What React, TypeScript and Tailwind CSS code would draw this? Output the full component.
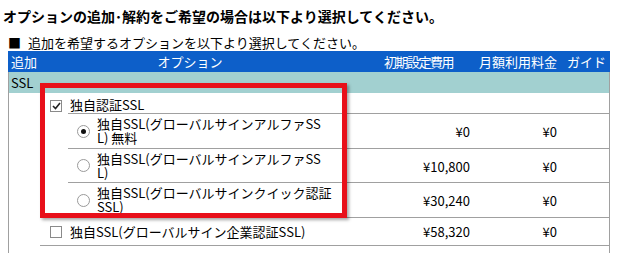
import React from 'react'

const font = { fontFamily: '"Noto Sans CJK JP", "Liberation Sans", sans-serif' }

function CheckBox({ checked }: { checked?: boolean }) {
  return (
    <span className="flex h-[12px] w-[12px] items-center justify-center border border-[#8a8a8a] bg-white">
      {checked && (
        <svg width="9" height="8" viewBox="0 0 9 8">
          <path d="M1 4 L3.5 6.5 L8 1" fill="none" stroke="#222" strokeWidth="1.6" />
        </svg>
      )}
    </span>
  )
}

function Radio({ checked }: { checked?: boolean }) {
  return (
    <span className="flex h-[13px] w-[13px] shrink-0 items-center justify-center rounded-full border border-[#9a9a9a] bg-white">
      {checked && <span className="h-[5px] w-[5px] rounded-full bg-[#111]" />}
    </span>
  )
}

const plans = [
  { lines: ['独自SSL(グローバルサインアルファSS', 'L) 無料'], init: '¥0', monthly: '¥0', checked: true, h: 'h-[35px]' },
  { lines: ['独自SSL(グローバルサインアルファSS', 'L)'], init: '¥10,800', monthly: '¥0', checked: false, h: 'h-[34px]' },
  { lines: ['独自SSL(グローバルサインクイック認証', 'SSL)'], init: '¥30,240', monthly: '¥0', checked: false, h: 'h-[35px]' },
]

export default function App() {
  return (
    <div className="relative h-[253px] w-[627px] overflow-hidden bg-white text-black" style={font}>
      {/* Heading */}
      <div className="mt-[7px] pl-[3px] text-[14px] font-bold leading-[18px]">
        オプションの追加･解約をご希望の場合は以下より選択してください。
      </div>
      <div className="mt-[10px] pl-[8px] text-[13px] leading-[16px]">
        <span className="mr-[4px]">■</span> 追加を希望するオプションを以下より選択してください。
      </div>

      {/* Table */}
      <div className="ml-[8px] w-[602px] text-[13px]">
        <div className="flex h-[21px] items-center bg-[#0d5fc9] text-white">
          <div className="w-[32px] pl-[3px]">追加</div>
          <div className="w-[300px] text-center">オプション</div>
          <div className="w-[135px] pr-[22px] text-right tracking-[-1.5px]">初期設定費用</div>
          <div className="w-[85px] pr-[3px] text-right">月額利用料金</div>
          <div className="flex-1 pl-[7px]">ガイド</div>
        </div>

        <div className="border-x border-[#a0a0a0]">
          <div className="flex h-[21px] items-center bg-[#a2d0d0] pl-[2px]">SSL</div>

          {/* 独自認証SSL group */}
          <div className="flex h-[21px]">
            <div className="w-[31px]" />
            <div className="flex w-[28px] items-center pl-[10px] pt-[5px]">
              <CheckBox checked />
            </div>
            <div className="flex flex-1 items-center border-b border-[#a0a0a0] pl-[2px] pt-[3px]">独自認証SSL</div>
          </div>

          {plans.map((p, i) => (
            <div key={i} className={`flex ${p.h}`}>
              <div className="w-[59px]" />
              <div className="flex flex-1 items-center border-b border-[#a0a0a0]">
                <div className="flex w-[272px] items-center">
                  <span className="ml-[9px]">
                    <Radio checked={p.checked} />
                  </span>
                  <span className="ml-[7px] leading-[14px]">
                    {p.lines[0]}
                    <br />
                    {p.lines[1]}
                  </span>
                </div>
                <div className="w-[135px] pr-[5px] pt-[2px] text-right">{p.init}</div>
                <div className="w-[85px] pr-[3px] pt-[2px] text-right">{p.monthly}</div>
                <div className="flex-1" />
              </div>
            </div>
          ))}

          <div className="flex h-[28px]">
            <div className="w-[31px]" />
            <div className="flex flex-1 items-center border-b border-[#a0a0a0]">
              <div className="flex w-[300px] items-center">
                <span className="ml-[10px]">
                  <CheckBox />
                </span>
                <span className="ml-[8px]">独自SSL(グローバルサイン企業認証SSL)</span>
              </div>
              <div className="w-[135px] pr-[5px] text-right">¥58,320</div>
              <div className="w-[85px] pr-[3px] text-right">¥0</div>
              <div className="flex-1" />
            </div>
          </div>
          <div className="h-[20px]" />
        </div>
      </div>

      {/* Red highlight frame */}
      <div className="pointer-events-none absolute left-[40px] top-[83px] h-[135px] w-[307px] border-[5px] border-[#e8101a] shadow-[2px_2px_3px_rgba(0,0,0,0.35)]" />
    </div>
  )
}
